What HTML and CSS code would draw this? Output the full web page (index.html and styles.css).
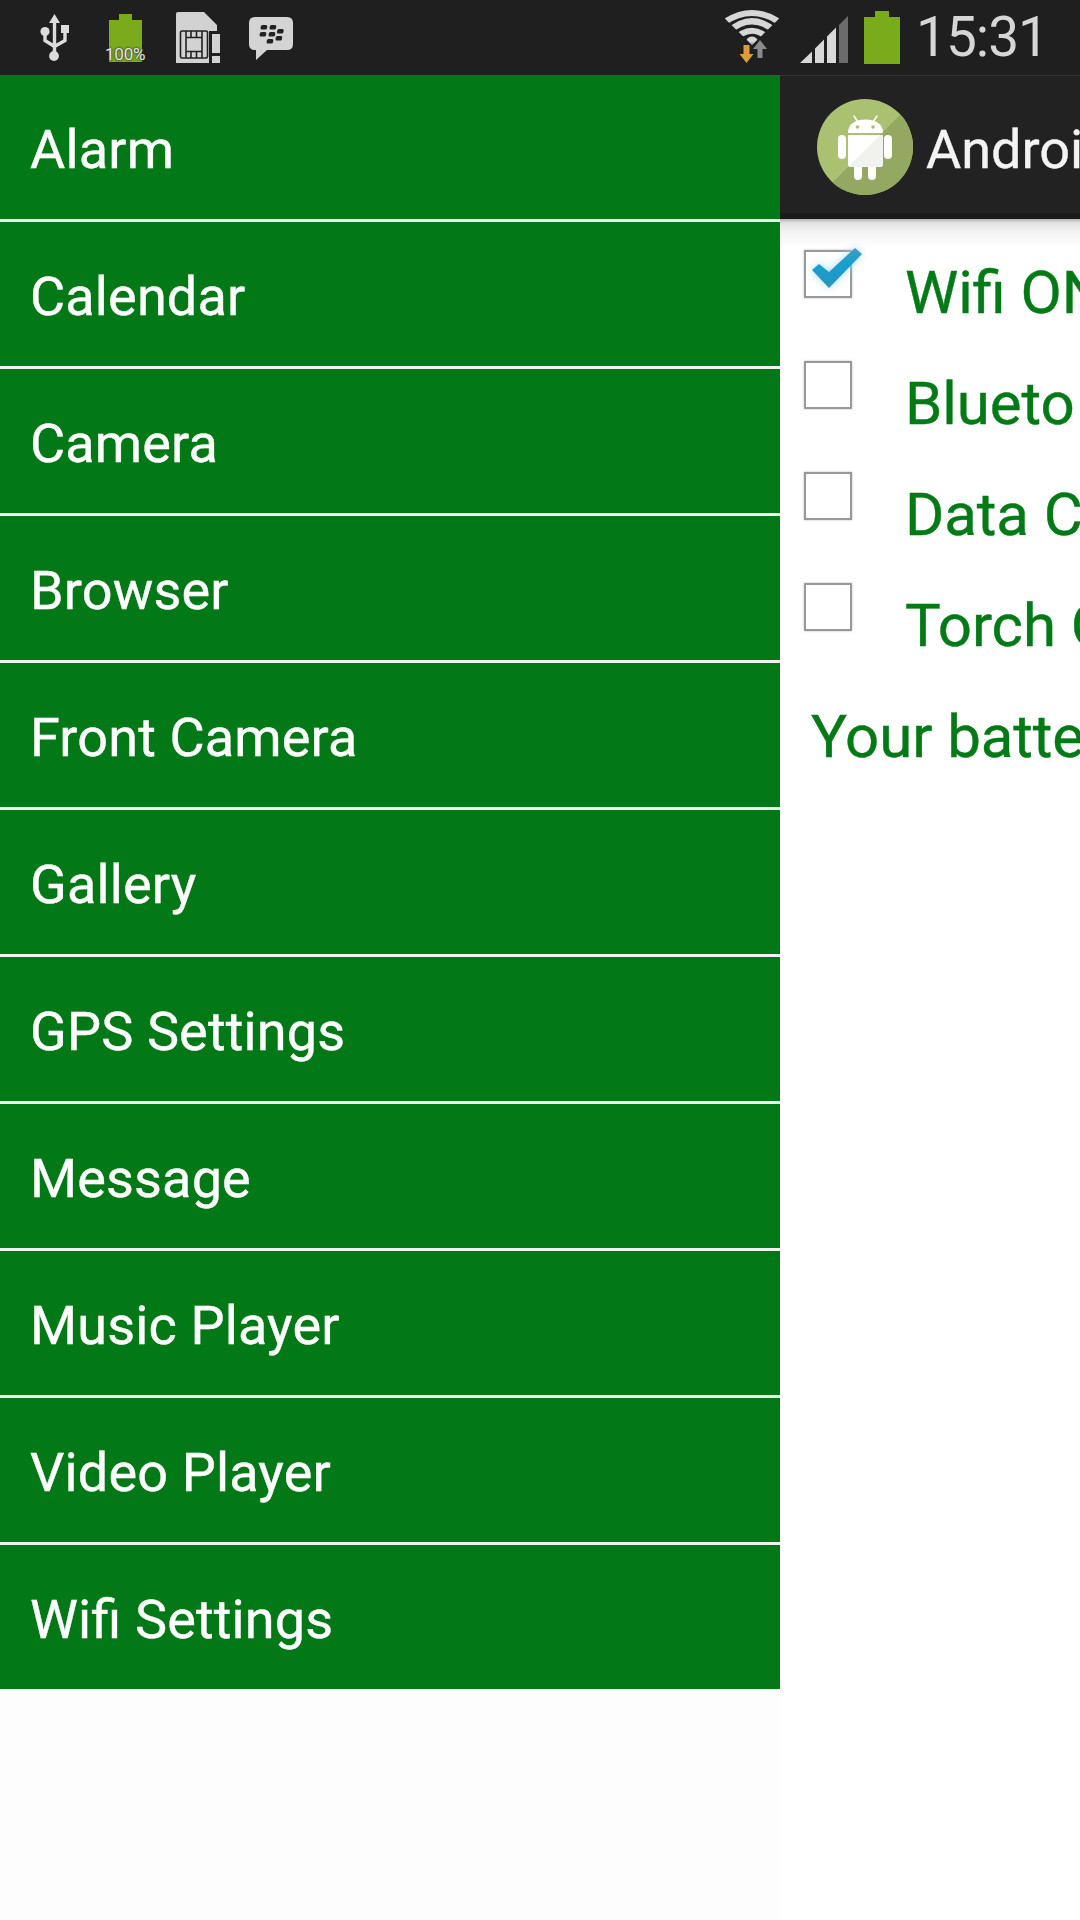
FILE: index.html
```html
<!DOCTYPE html>
<html lang="en">
<head>
    <meta charset="UTF-8">
    <meta name="viewport" content="width=device-width, initial-scale=1.0">
    <title>Android Settings Drawer</title>
    <link rel="stylesheet" href="styles.css">
</head>
<body>
    <header class="status-bar">
        <div class="status-left">
            <svg class="icon-usb" width="30" height="50" viewBox="40 13 30 50">
                <g fill="none" stroke="#dcdcdc" stroke-width="3.400">
                    <path d="M54.5 20V56M45 31v9.500l9.500 6M65 29v11.500l-10.500 6"/>
                </g>
                <path d="M54.500 14l5.500 9h-11zM61 25h8v8h-8z" fill="#dcdcdc"/>
                <circle cx="45" cy="31.500" r="4.600" fill="#dcdcdc"/>
                <circle cx="54" cy="56" r="4.900" fill="#dcdcdc"/>
            </svg>
            <div class="battery-small">
                <svg width="33" height="48" viewBox="0 0 33 48">
                    <path d="M10 0h13v6h10v42H0V6h10z" fill="#7aab1a"/>
                </svg>
                <span class="battery-level">100%</span>
            </div>
            <svg class="icon-sim" width="46" height="52" viewBox="175 12 46 52">
                <path d="M178 12h26l13 13v6h-8v32h-33v-49q0-2 2-2z" fill="#d2d2d2"/>
                <path d="M212 34h8v19h-8zM212 56h8v7h-8z" fill="#d2d2d2"/>
                <g fill="none" stroke="#222" stroke-width="1.600">
                    <rect x="180.500" y="31" width="27" height="27" rx="1.500"/>
                    <path d="M186 31v27M202 31v27M186 37.500h16M186 51.500h16M191 31v6.500M196.500 31v6.500M191 51.500v6.500M196.500 51.500v6.500"/>
                </g>
            </svg>
            <svg class="icon-bbm" width="44" height="44" viewBox="248 17 44 44">
                <path d="M254 17h32q6 0 6 6v21q0 6-6 6h-20l-11 10v-10h-1q-6 0-6-6V23q0-6 6-6z" fill="#d4d4d4"/>
                <g fill="#222">
                    <rect x="259.500" y="25" width="6.500" height="4.600" rx="1.500" transform="skewX(-8) translate(4 0)"/>
                    <rect x="268.500" y="25" width="6.500" height="4.600" rx="1.500" transform="skewX(-8) translate(4 0)"/>
                    <rect x="258.500" y="32" width="6.500" height="4.600" rx="1.500" transform="skewX(-8) translate(5 0)"/>
                    <rect x="267.500" y="32" width="6.500" height="4.600" rx="1.500" transform="skewX(-8) translate(5 0)"/>
                    <rect x="276.500" y="29" width="6.500" height="4.600" rx="1.500" transform="skewX(-8) translate(4 0)"/>
                    <rect x="275" y="36" width="6.500" height="4.600" rx="1.500" transform="skewX(-8) translate(5 0)"/>
                    <rect x="265.500" y="39" width="6.500" height="4.600" rx="1.500" transform="skewX(-8) translate(6 0)"/>
                </g>
            </svg>
        </div>
        <div class="status-right">
            <svg class="icon-wifi" width="54" height="56" viewBox="725 9 54 56">
                <clipPath id="wifiFan">
                    <path d="M752 45L721 15V0h62v15z"/>
                </clipPath>
                <g clip-path="url(#wifiFan)" fill="none" stroke="#d6d6d6" stroke-width="6">
                    <path d="M724 22.500Q752 3.500 780 22.500"/>
                    <path d="M728 32Q752 10.500 776 32"/>
                    <path d="M732 42Q752 19.500 772 42"/>
                    <circle cx="752" cy="43" r="3.500"/>
                </g>
                <path d="M743.500 45h6v9h4l-7 9-7-9h4z" fill="#e09a38"/>
                <path d="M760 40l7 9h-4.500v9h-5v-9H753z" fill="#8a8a8a"/>
            </svg>
            <svg class="icon-signal" width="48" height="48" viewBox="800 16 48 48">
                <path d="M800 63l12-11.500V63zM815 48.500l9-9V63h-9zM827 36.500l9-9V63h-9z" fill="#d8d8d8"/>
                <path d="M839 25l9-9v47h-9z" fill="#6c6c6c"/>
            </svg>
            <svg class="icon-battery" width="36" height="53" viewBox="0 0 36 53">
                <path d="M11 0h14v6h11v47H0V6h11z" fill="#7aab1a"/>
            </svg>
            <span class="clock">15:31</span>
        </div>
    </header>

    <div class="screen">
        <nav class="drawer">
            <ul>
                <li>Alarm</li>
                <li>Calendar</li>
                <li>Camera</li>
                <li>Browser</li>
                <li>Front Camera</li>
                <li>Gallery</li>
                <li>GPS Settings</li>
                <li>Message</li>
                <li>Music Player</li>
                <li>Video Player</li>
                <li>Wifi Settings</li>
            </ul>
        </nav>

        <main class="content">
            <div class="action-bar">
                <svg class="app-logo" width="96" height="96" viewBox="0 0 96 96">
                    <clipPath id="logoClip"><circle cx="48" cy="48" r="48"/></clipPath>
                    <clipPath id="shadeClip"><path d="M96 3V96H3z"/></clipPath>
                    <g clip-path="url(#logoClip)">
                        <rect width="96" height="96" fill="#a9c171"/>
                        <path d="M96 3V96H3z" fill="#93a961"/>
                    </g>
                    <g fill="#fff">
                        <path d="M31 34q0-13 17.500-13.500Q66 21 66 34z"/>
                        <path d="M37 17l4 6M60 17l-4 6" stroke="#fff" stroke-width="1.500" stroke-linecap="round"/>
                        <path d="M31 36h35v29q0 3-3 3H34q-3 0-3-3z"/>
                        <rect x="21" y="36" width="8" height="24" rx="4"/>
                        <rect x="67" y="36" width="8" height="24" rx="4"/>
                        <rect x="37" y="60" width="8" height="21" rx="4"/>
                        <rect x="51" y="60" width="8" height="21" rx="4"/>
                    </g>
                    <path d="M31 36h35v29q0 3-3 3H34q-3 0-3-3z" fill="#f1f2ee" clip-path="url(#shadeClip)"/>
                    <circle cx="40.500" cy="28" r="1.800" fill="#a9c171"/>
                    <circle cx="56" cy="28" r="1.800" fill="#a9c171"/>
                </svg>
                <h1>Androi</h1>
            </div>
            <div class="options">
                <div class="option">
                    <span class="checkbox">
                        <svg class="check-mark" width="64" height="56" viewBox="0 0 64 56">
                            <defs>
                                <linearGradient id="checkFill" x1="0" y1="0" x2="0" y2="1">
                                    <stop offset="0" stop-color="#3f9dc4"/>
                                    <stop offset="0.400" stop-color="#15a0d0"/>
                                    <stop offset="1" stop-color="#2b93bd"/>
                                </linearGradient>
                            </defs>
                            <path d="M10 24l7-6 10 8L53 2l7 6-33 34z" fill="url(#checkFill)"/>
                        </svg>
                    </span>
                    <span class="option-label">Wifi ON</span>
                </div>
                <div class="option">
                    <span class="checkbox"></span>
                    <span class="option-label">Blueto</span>
                </div>
                <div class="option">
                    <span class="checkbox"></span>
                    <span class="option-label">Data C</span>
                </div>
                <div class="option">
                    <span class="checkbox"></span>
                    <span class="option-label">Torch O</span>
                </div>
                <p class="battery-text">Your batte</p>
            </div>
        </main>
    </div>
</body>
</html>
```
FILE: styles.css
```css
* {
    box-sizing: border-box;
}
body {
    margin: 0;
    height: 1920px;
    overflow: hidden;
    background-color: #fefefe;
    font-family: Roboto, "Liberation Sans", sans-serif;
    font-feature-settings: "liga" 1;
}
svg {
    display: block;
    flex: none;
}

/* Status bar */
.status-bar {
    display: flex;
    justify-content: space-between;
    height: 75px;
    background-color: #1f1f1f;
}
.status-left,
.status-right {
    display: flex;
    align-items: flex-start;
}
.status-left {
    padding-left: 40px;
}
.status-right {
    padding-right: 39px;
}
.icon-usb {
    margin-top: 13px;
}
.battery-small {
    position: relative;
    margin: 14px 0 0 39px;
}
.battery-level {
    position: absolute;
    left: -4px;
    bottom: -1px;
    font-size: 17px;
    line-height: 17px;
    letter-spacing: -0.2px;
    color: #e4e4e4;
    text-shadow: 0 0 2px #333, 0 0 2px #333;
}
.icon-sim {
    margin: 12px 0 0 33px;
}
.icon-bbm {
    margin: 17px 0 0 28px;
}
.icon-wifi {
    margin-top: 9px;
}
.icon-signal {
    margin: 16px 0 0 21px;
}
.icon-battery {
    margin: 11px 0 0 16px;
}
.clock {
    width: 125px;
    margin-left: 16px;
    font-size: 55px;
    line-height: 75px;
    letter-spacing: -1px;
    color: #d6d6d6;
    white-space: nowrap;
}

/* Drawer + page */
.screen {
    display: flex;
    height: 1845px;
}
.drawer {
    width: 780px;
    flex: none;
    background-color: #fdfdfd;
}
.drawer ul {
    list-style: none;
    margin: 0;
    padding: 0;
}
.drawer li {
    height: 147px;
    padding-left: 30px;
    border-bottom: 3px solid #edf5ee;
    background-color: #027916;
    color: #fff;
    font-size: 54px;
    line-height: 149px;
    letter-spacing: 0.15px;
    -webkit-text-stroke: 0.4px #fff;
}
.drawer li:last-child {
    height: 144px;
    border-bottom: none;
}
.content {
    flex: 1;
    min-width: 0;
    overflow: hidden;
    background-color: #fff;
}
.action-bar {
    display: flex;
    align-items: center;
    height: 144px;
    padding: 4px 0 0 37px;
    background-color: #222;
    border-top: 1px solid #333;
    border-bottom: 6px solid #1b1b1b;
}
.action-bar h1 {
    margin: 5px 0 0 13px;
    font-size: 54px;
    font-weight: 400;
    color: #f3f3f3;
    -webkit-text-stroke: 0.4px #f3f3f3;
}

/* Toggle list */
.options {
    height: 1701px;
    padding: 31px 0 0 24px;
    background: linear-gradient(#b4b4b4 0, #e2e2e2 4px, #f2f2f2 12px, #fff 28px);
    color: #047a17;
    font-size: 60px;
    letter-spacing: -0.1px;
    white-space: nowrap;
    -webkit-text-stroke: 0.4px #047a17;
}
.option {
    display: flex;
    height: 111px;
}
.checkbox {
    position: relative;
    flex: none;
    width: 48px;
    height: 48px;
    border: 2px solid #999;
    box-shadow: 0 0 2px #bbb;
}
.check-mark {
    position: absolute;
    left: -4px;
    top: -6px;
    filter: drop-shadow(0 0 4px #a5dcf2);
}
.option-label {
    margin-left: 53px;
    line-height: 85px;
}
.battery-text {
    margin: 0 0 0 7px;
    line-height: 85px;
}
```
